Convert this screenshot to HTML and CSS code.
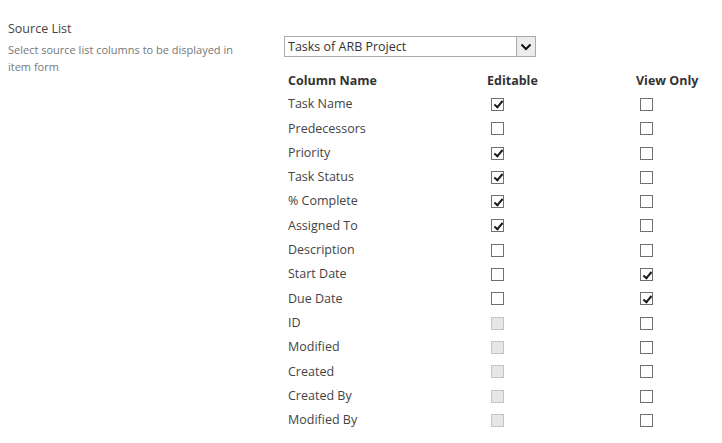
FILE: index.html
```html
<!DOCTYPE html>
<html>
<head>
<meta charset="utf-8">
<link rel="stylesheet" href="styles.css">
</head>
<body>
<div class="page">
  <div class="side">
    <div class="side-title">Source List</div>
    <div class="side-desc">Select source list columns to be displayed in item form</div>
  </div>
  <div class="main">
    <div class="select">
      <span class="select-text">Tasks of ARB Project</span>
      <span class="select-btn"><svg width="12" height="8" viewBox="0 0 12 8"><path d="M1.5 1.5 L6 6 L10.5 1.5" fill="none" stroke="#111" stroke-width="2"/></svg></span>
    </div>
    <div class="grid">
      <div class="hd">Column Name</div><div class="hd">Editable</div><div class="hd">View Only</div>

      <div class="nm">Task Name</div><div class="cb"><span class="box on"></span></div><div class="cb"><span class="box"></span></div>
      <div class="nm">Predecessors</div><div class="cb"><span class="box"></span></div><div class="cb"><span class="box"></span></div>
      <div class="nm">Priority</div><div class="cb"><span class="box on"></span></div><div class="cb"><span class="box"></span></div>
      <div class="nm">Task Status</div><div class="cb"><span class="box on"></span></div><div class="cb"><span class="box"></span></div>
      <div class="nm">% Complete</div><div class="cb"><span class="box on"></span></div><div class="cb"><span class="box"></span></div>
      <div class="nm">Assigned To</div><div class="cb"><span class="box on"></span></div><div class="cb"><span class="box"></span></div>
      <div class="nm">Description</div><div class="cb"><span class="box"></span></div><div class="cb"><span class="box"></span></div>
      <div class="nm">Start Date</div><div class="cb"><span class="box"></span></div><div class="cb"><span class="box on"></span></div>
      <div class="nm">Due Date</div><div class="cb"><span class="box"></span></div><div class="cb"><span class="box on"></span></div>
      <div class="nm">ID</div><div class="cb"><span class="box dis"></span></div><div class="cb"><span class="box"></span></div>
      <div class="nm">Modified</div><div class="cb"><span class="box dis"></span></div><div class="cb"><span class="box"></span></div>
      <div class="nm">Created</div><div class="cb"><span class="box dis"></span></div><div class="cb"><span class="box"></span></div>
      <div class="nm">Created By</div><div class="cb"><span class="box dis"></span></div><div class="cb"><span class="box"></span></div>
      <div class="nm">Modified By</div><div class="cb"><span class="box dis"></span></div><div class="cb"><span class="box"></span></div>
    </div>
  </div>
</div>
</body>
</html>
```

FILE: styles.css
```css
html, body {
  margin: 0;
  padding: 0;
  background: #fff;
}
body {
  font-family: "Open Sans", "Noto Sans", sans-serif;
  color: #444;
}
.page {
  display: flex;
  padding-top: 20px;
}
.side {
  width: 284px;
  padding-left: 8px;
  box-sizing: border-box;
  flex: none;
}
.side-title {
  font-size: 12.5px;
  line-height: 18px;
  color: #444;
}
.side-desc {
  margin-top: 4px;
  font-size: 11px;
  line-height: 16.5px;
  color: #777;
  width: 236px;
}
.main {
  padding-top: 16px;
}
.select {
  display: flex;
  width: 252px;
  height: 21px;
  border: 1px solid #ababab;
  box-sizing: border-box;
  align-items: stretch;
}
.select-text {
  flex: 1;
  font-size: 12.5px;
  line-height: 19px;
  padding-left: 3px;
  color: #333;
}
.select-btn {
  width: 18px;
  background: #ececec;
  border-left: 1px solid #ababab;
  display: flex;
  align-items: center;
  justify-content: center;
}
.grid {
  display: grid;
  grid-template-columns: 199px 149px 90px;
  grid-auto-rows: 24.3px;
  margin-top: 11px;
}
.hd {
  padding-left: 4px;
  padding-top: 2px;
  font-size: 12.5px;
  font-weight: 700;
  color: #333;
  line-height: 22px;
}
.nm {
  padding-left: 4px;
  font-size: 12.5px;
  color: #444;
  line-height: 24px;
}
.cb {
  padding-left: 8px;
  display: flex;
  align-items: center;
}
.box {
  width: 13px;
  height: 13px;
  border: 1px solid #707070;
  box-sizing: border-box;
  background: #fff;
  position: relative;
}
.box.on::after {
  content: "";
  position: absolute;
  left: 3.5px;
  top: 0.5px;
  width: 3px;
  height: 7px;
  border-right: 2px solid #1a1a1a;
  border-bottom: 2px solid #1a1a1a;
  transform: rotate(40deg);
}
.box.dis {
  background: #e6e6e6;
  border-color: #c4c4c4;
}
```
